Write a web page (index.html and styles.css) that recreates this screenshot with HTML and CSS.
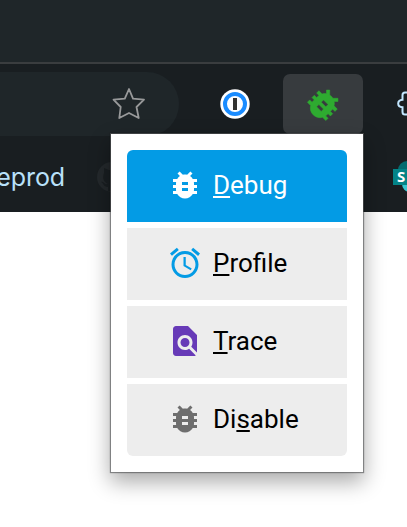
FILE: index.html
```
<!DOCTYPE html>
<html lang="en">
<head>
<meta charset="utf-8">
<title>Debug menu</title>
<link rel="stylesheet" href="styles.css">
</head>
<body>
<header class="browser">
  <div class="tabs"></div>
  <div class="toolbar">
    <div class="address">
      <svg class="star" viewBox="0 0 34 34"><path d="M17 2 21 11.7 32 12.6 24.5 20 26.7 31 17 26 7.3 31 8.7 20 1.5 12.6 12.8 11.7Z"/></svg>
    </div>
    <svg class="lock" viewBox="0 0 30 30"><circle cx="15" cy="15" r="14.7" fill="#fff"/><circle cx="15" cy="15" r="10" fill="none" stroke="#1a8cff" stroke-width="4"/><path d="M13 9h4v12h-4z" fill="#333331"/></svg>
    <div class="extension">
      <svg viewBox="0 0 24 24"><path transform="rotate(45 12 12)" d="M20 8h-2.81c-.45-.78-1.07-1.45-1.82-1.96L17 4.41 15.59 3l-2.17 2.17C12.96 5.06 12.49 5 12 5s-.96.06-1.41.17L8.41 3 7 4.41l1.62 1.63C7.88 6.55 7.26 7.22 6.81 8H4v2h2.09c-.05.33-.09.66-.09 1v1H4v2h2v1c0 .34.04.67.09 1H4v2h2.81c1.04 1.79 2.97 3 5.19 3s4.15-1.21 5.19-3H20v-2h-2.09c.05-.33.09-.66.09-1v-1h2v-2h-2v-1c0-.34-.04-.67-.09-1H20V8zm-6 8h-4v-2h4v2zm0-4h-4v-2h4v2z"/></svg>
    </div>
    <svg class="puzzle" viewBox="0 0 10 26"><path d="M12 1.5H8Q5.5 1.5 5.5 4V8.7Q1.2 9 1.2 12.5T5.5 16.3V21Q5.5 23.5 8 23.5H12"/></svg>
  </div>
  <div class="bookmarks">
    <span class="bookmark">eprod</span>
    <svg class="github" viewBox="0 0 32 32"><circle cx="16" cy="16" r="15"/><path d="M12 30v-4c-5 0-4-4-7-5 3-1 3 3 7 2-4-2-6-5-4-11L8 7l5 2h6l5-2v5c2 6 0 9-4 11v7z"/></svg>
    <svg class="share" viewBox="0 0 14 34"><circle cx="14" cy="10" r="9" fill="#036c70"/><circle cx="17" cy="24" r="8" fill="#37c6d0"/><path d="M0 9h14v16H0z" fill="#038387"/><text x="4" y="22">S</text></svg>
  </div>
</header>
<nav class="popup">
  <div class="item primary">
    <svg viewBox="0 0 24 24"><path d="M20 8h-2.81c-.45-.78-1.07-1.45-1.82-1.96L17 4.41 15.59 3l-2.17 2.17C12.96 5.06 12.49 5 12 5s-.96.06-1.41.17L8.41 3 7 4.41l1.62 1.63C7.88 6.55 7.26 7.22 6.81 8H4v2h2.09c-.05.33-.09.66-.09 1v1H4v2h2v1c0 .34.04.67.09 1H4v2h2.81c1.04 1.79 2.97 3 5.19 3s4.15-1.21 5.19-3H20v-2h-2.09c.05-.33.09-.66.09-1v-1h2v-2h-2v-1c0-.34-.04-.67-.09-1H20V8zm-6 8h-4v-2h4v2zm0-4h-4v-2h4v2z"/></svg>
    <span><u>D</u>ebug</span>
  </div>
  <div class="item profile">
    <svg viewBox="0 0 24 24"><path d="M22 5.72l-4.6-3.86-1.29 1.53 4.6 3.86L22 5.72zM7.88 3.39L6.6 1.86 2 5.71l1.29 1.53 4.59-3.85zM12.5 8H11v6l4.75 2.85.75-1.23-4-2.37V8zM12 4c-4.97 0-9 4.03-9 9s4.02 9 9 9c4.97 0 9-4.03 9-9s-4.03-9-9-9zm0 16c-3.87 0-7-3.13-7-7s3.13-7 7-7 7 3.13 7 7-3.13 7-7 7z"/></svg>
    <span><u>P</u>rofile</span>
  </div>
  <div class="item trace">
    <svg viewBox="0 0 24 24"><path d="M20 19.59V8l-6-6H6c-1.1 0-1.99.9-1.99 2L4 20c0 1.1.89 2 1.99 2H18c.45 0 .85-.15 1.19-.4l-4.43-4.43c-.8.52-1.74.83-2.76.83-2.76 0-5-2.24-5-5s2.24-5 5-5 5 2.24 5 5c0 1.02-.31 1.96-.83 2.75L20 19.59zM9 13c0 1.66 1.34 3 3 3s3-1.34 3-3-1.34-3-3-3-3 1.34-3 3z"/></svg>
    <span><u>T</u>race</span>
  </div>
  <div class="item disable">
    <svg viewBox="0 0 24 24"><path d="M20 8h-2.81c-.45-.78-1.07-1.45-1.82-1.96L17 4.41 15.59 3l-2.17 2.17C12.96 5.06 12.49 5 12 5s-.96.06-1.41.17L8.41 3 7 4.41l1.62 1.63C7.88 6.55 7.26 7.22 6.81 8H4v2h2.09c-.05.33-.09.66-.09 1v1H4v2h2v1c0 .34.04.67.09 1H4v2h2.81c1.04 1.79 2.97 3 5.19 3s4.15-1.21 5.19-3H20v-2h-2.09c.05-.33.09-.66.09-1v-1h2v-2h-2v-1c0-.34-.04-.67-.09-1H20V8zm-6 8h-4v-2h4v2zm0-4h-4v-2h4v2z"/></svg>
    <span>Di<u>s</u>able</span>
  </div>
</nav>
</body>
</html>
```
FILE: styles.css
```
* { box-sizing: border-box; }
body {
  margin: 0;
  height: 527px;
  overflow: hidden;
  background: #fff;
  font-family: Roboto, sans-serif;
}
svg { display: block; flex: none; }
.browser {
  height: 212px;
  overflow: hidden;
  background: #191e21;
}
.tabs {
  height: 64px;
  background: #1f2629;
  border-bottom: 2px solid #3a3d3f;
}
.toolbar {
  display: flex;
  align-items: center;
  height: 72px;
  padding-top: 8px;
}
.address {
  display: flex;
  align-items: center;
  justify-content: flex-end;
  width: 179px;
  height: 64px;
  padding-right: 33px;
  border-radius: 0 32px 32px 0;
  background: #1f2629;
}
.star {
  width: 34px;
  height: 34px;
  fill: none;
  stroke: #98999a;
  stroke-width: 1.8;
  stroke-linejoin: round;
}
.lock { width: 30px; height: 30px; margin-left: 41px; }
.extension {
  display: flex;
  align-items: center;
  justify-content: center;
  width: 80px;
  height: 60px;
  margin-left: 33px;
  border-radius: 7px;
  background: #373b3e;
}
.extension svg {
  width: 39px;
  height: 39px;
  fill: #2eab30;
  stroke: #2eab30;
  stroke-width: .3;
}
.puzzle {
  width: 10px;
  height: 26px;
  margin-left: 34px;
  fill: none;
  stroke: #c2e7ff;
  stroke-width: 2;
}
.bookmarks {
  display: flex;
  align-items: center;
  height: 76px;
  padding-top: 6px;
}
.bookmark {
  display: flex;
  justify-content: flex-end;
  width: 65px;
  color: #b9e1fa;
  font: 25px/30px Inter, sans-serif;
  letter-spacing: -.1px;
}
.github { width: 32px; height: 32px; margin-left: 31px; fill: #191e21; }
.github circle { fill: #24292c; }
.share { width: 14px; height: 34px; margin-left: 265px; }
.share text { fill: #fff; font: bold 15px "Open Sans", sans-serif; }
.popup {
  position: absolute;
  left: 110px;
  top: 133px;
  display: flex;
  flex-direction: column;
  gap: 6px;
  width: 254px;
  height: 340px;
  padding: 16px;
  border: 1px solid #85878966;
  background: #fff;
  background-clip: padding-box;
  box-shadow: 0 0 1px #0006, 0 9px 20px #0005;
}
.item {
  display: flex;
  align-items: center;
  gap: 10px;
  height: 72px;
  padding: 0 0 2px 40px;
  background: #ededed;
  color: #000;
  font-size: 26px;
  line-height: 32px;
}
.item:first-child { border-radius: 6px 6px 0 0; }
.item:last-child { border-radius: 0 0 6px 6px; }
.item svg { width: 36px; height: 36px; margin-bottom: 1px; fill: currentColor; }
.item u {
  text-decoration-thickness: 2px;
  text-underline-offset: 2px;
  text-decoration-skip-ink: none;
}
.primary { background: #039be5; color: #fff; }
.profile svg { fill: #039be5; }
.trace svg { fill: #673ab7; }
.disable svg { fill: #6e6e6e; }
```
